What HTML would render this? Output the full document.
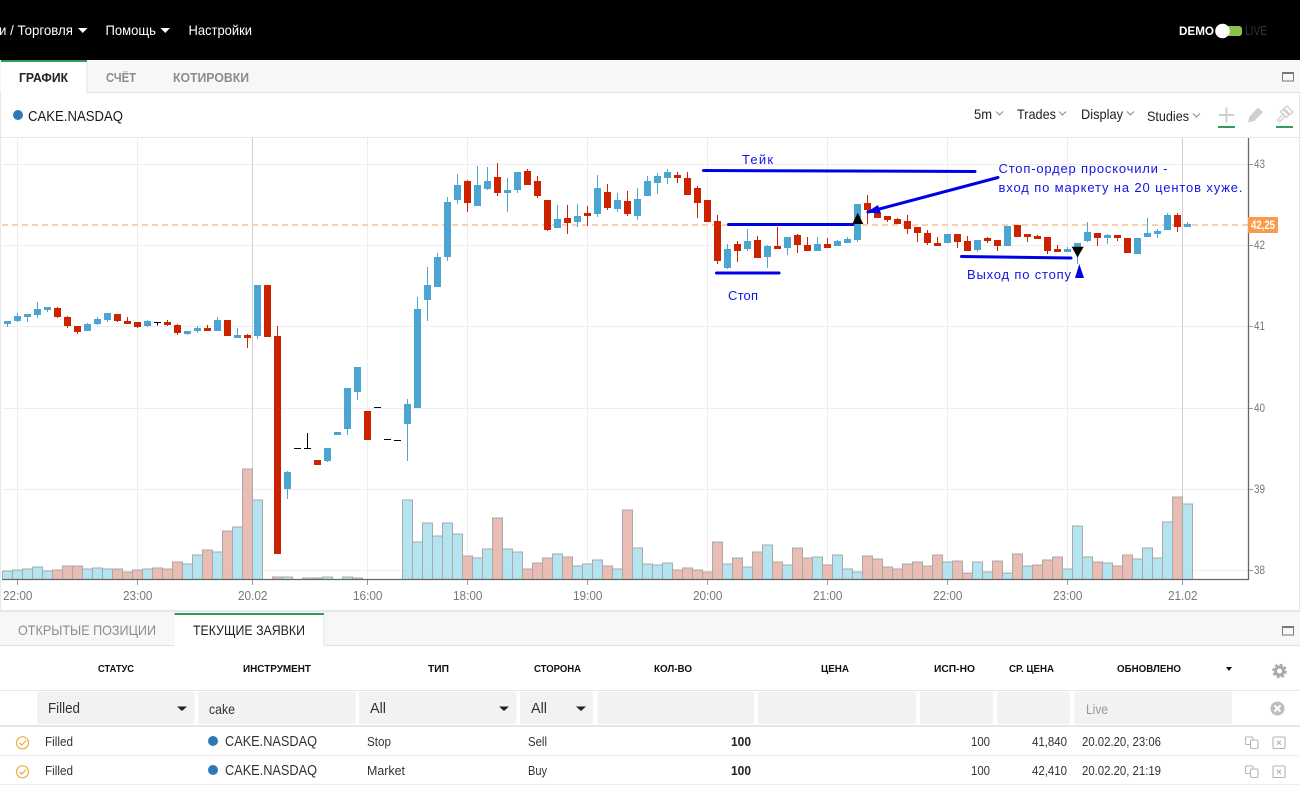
<!DOCTYPE html>
<html lang="ru"><head><meta charset="utf-8"><title>CAKE.NASDAQ</title>
<style>
html,body{margin:0;padding:0;width:1300px;height:795px;overflow:hidden;background:#fff}
svg{display:block;position:absolute;left:0;top:0}
text{font-family:"Liberation Sans","Noto Sans CJK SC",sans-serif;white-space:pre}
.n{font-size:14px;fill:#fff}
.tb{font-size:13px;fill:#8c8c8c}
.ta{font-size:13px;fill:#222;font-weight:bold}
.tl{font-size:14px;fill:#222}
.ax{font-size:13px;fill:#777}
.ay{font-size:12px;fill:#777}
.an{font-size:13px;fill:#1414e6}
.h{font-size:10.500px;font-weight:bold;fill:#111}
.c{font-size:13px;fill:#333}
.f{font-size:15px;fill:#333}
</style></head><body>
<svg width="1300" height="795" viewBox="0 0 1300 795" xmlns="http://www.w3.org/2000/svg">
<!-- header -->
<rect x="0" y="0" width="1300" height="60" fill="#000"/>
<text class="n" x="-1" y="35" textLength="74" lengthAdjust="spacingAndGlyphs">и / Торговля</text>
<path d="M78 28h9.500l-4.750 5z" fill="#fff"/>
<text class="n" x="105.500" y="35" textLength="50.500" lengthAdjust="spacingAndGlyphs">Помощь</text>
<path d="M160.500 28h9.500l-4.750 5z" fill="#fff"/>
<text class="n" x="188.500" y="35" textLength="63.500" lengthAdjust="spacingAndGlyphs">Настройки</text>
<text x="1179" y="35" font-size="12" font-weight="bold" fill="#fff" textLength="35" lengthAdjust="spacingAndGlyphs">DEMO</text>
<rect x="1222" y="26" width="20" height="10" rx="3" fill="#8bc34a"/>
<circle cx="1222.500" cy="31" r="7.300" fill="#fff"/>
<text x="1245" y="35" font-size="13" fill="#333" textLength="22" lengthAdjust="spacingAndGlyphs">LIVE</text>

<!-- top tabs -->
<rect x="0" y="60" width="1300" height="32" fill="#f7f7f7"/>
<rect x="0" y="92" width="1300" height="1" fill="#e3e3e3"/>
<rect x="1" y="60" width="86" height="33" fill="#fff"/>
<rect x="1" y="60" width="86" height="2" fill="#2e9e5b"/>
<rect x="86.500" y="62" width="1" height="31" fill="#e3e3e3"/>
<text class="ta" x="19" y="82" textLength="49" lengthAdjust="spacingAndGlyphs">ГРАФИК</text>
<text class="tb" x="106" y="82" textLength="30" lengthAdjust="spacingAndGlyphs" font-weight="bold">СЧЁТ</text>
<text class="tb" x="173" y="82" textLength="76" lengthAdjust="spacingAndGlyphs" font-weight="bold">КОТИРОВКИ</text>
<g fill="none" stroke="#777"><rect x="1282.500" y="72.500" width="11" height="8.500"/><path d="M1282 73h12" stroke-width="2"/></g>

<!-- toolbar -->
<circle cx="18" cy="115" r="5" fill="#2e78b5"/>
<text x="28" y="121" font-size="15" fill="#1a1a1a" textLength="95" lengthAdjust="spacingAndGlyphs">CAKE.NASDAQ</text>
<text class="tl" x="974" y="119" textLength="18" lengthAdjust="spacingAndGlyphs">5m</text>
<text class="tl" x="1017" y="119" textLength="39" lengthAdjust="spacingAndGlyphs">Trades</text>
<text class="tl" x="1081" y="119" textLength="42" lengthAdjust="spacingAndGlyphs">Display</text>
<text class="tl" x="1147" y="121" textLength="42" lengthAdjust="spacingAndGlyphs">Studies</text>
<path d="M996 111.500l3.500 3.500 3.500-3.500M1059 111.500l3.500 3.500 3.500-3.500M1127 111.500l3.500 3.500 3.500-3.500M1193 113.500l3.500 3.500 3.500-3.500" fill="none" stroke="#8a8a8a"/>
<path d="M1219 115h15M1226.500 107.500v15" stroke="#cfcfcf" stroke-width="2" fill="none"/>
<rect x="1218" y="126" width="17" height="2" fill="#2e9e5b"/>
<path d="M1248 122.500l1.500-6 8.500-9 5 4.500-8.500 9z" fill="#cfcfcf"/>
<g fill="none" stroke="#cfcfcf" stroke-width="1.300"><path d="M1284 108.500l3-2.500 6 6-3 2.500zM1283 109.500l-2.500 2.500 6 5.500 2.500-2.500z"/><path d="M1284 113.500l-6.500 6.500 2 2 6.500-6.500"/></g>
<rect x="1276" y="126" width="17" height="2" fill="#2e9e5b"/>
<rect x="0" y="137" width="1300" height="1" fill="#e6e6e6"/>
<rect x="0" y="93" width="1" height="517" fill="#e8e8e8"/>
<rect x="1299" y="93" width="1" height="517" fill="#e8e8e8"/>

<!-- chart grid -->
<path d="M2 164.500H1248M2 245.500H1248M2 326.500H1248M2 408.500H1248M2 489.500H1248M2 570.500H1248" stroke="#eee" stroke-width="1" fill="none"/>
<path d="M17.500 138V579M137.500 138V579M367.500 138V579M467.500 138V579M587.500 138V579M707.500 138V579M827.500 138V579M947.500 138V579M1067.500 138V579" stroke="#eee" stroke-width="1" fill="none"/>
<path d="M252.500 138V579M1182.500 138V579" stroke="#cfcfcf" stroke-width="1" fill="none"/>

<!-- volume -->
<g stroke="#a9a9a9" stroke-width="1">
<path fill="#a9e0ee" fill-opacity=".88" d="M2.500 579V571h10V579M12.500 579V570h10V579M22.500 579V569h10V579M32.500 579V567h10V579M42.500 579V571h10V579M82.500 579V569h10V579M92.500 579V568h10V579M102.500 579V569h10V579M142.500 579V569h10V579M182.500 579V564h10V579M192.500 579V555h10V579M212.500 579V552h10V579M232.500 579V527h10V579M252.500 579V500h10V579M282.500 579V577h10V579M302.500 579V578h10V579M322.500 579V577h10V579M342.500 579V577h10V579M352.500 579V578h10V579M402.500 579V500h10V579M412.500 579V542h10V579M422.500 579V523h10V579M432.500 579V536h10V579M442.500 579V523h10V579M452.500 579V534h10V579M472.500 579V558h10V579M482.500 579V549h10V579M502.500 579V549h10V579M512.500 579V552h10V579M552.500 579V554h10V579M572.500 579V566h10V579M582.500 579V564h10V579M592.500 579V560h10V579M612.500 579V569h10V579M632.500 579V548h10V579M642.500 579V564h10V579M652.500 579V565h10V579M662.500 579V563h10V579M722.500 579V564h10V579M742.500 579V567h10V579M762.500 579V545h10V579M782.500 579V565h10V579M812.500 579V557h10V579M832.500 579V555h10V579M842.500 579V569h10V579M852.500 579V572h10V579M942.500 579V562h10V579M972.500 579V562h10V579M982.500 579V572h10V579M1002.500 579V573h10V579M1022.500 579V566h10V579M1062.500 579V569h10V579M1072.500 579V526h10V579M1082.500 579V557h10V579M1102.500 579V563h10V579M1132.500 579V559h10V579M1142.500 579V548h10V579M1152.500 579V558h10V579M1162.500 579V522h10V579M1182.500 579V504h10V579"/>
<path fill="#e6b4aa" fill-opacity=".88" d="M52.500 579V570h10V579M62.500 579V566h10V579M72.500 579V566h10V579M112.500 579V569h10V579M122.500 579V572h10V579M132.500 579V570h10V579M152.500 579V568h10V579M162.500 579V569h10V579M172.500 579V562h10V579M202.500 579V550h10V579M222.500 579V531h10V579M242.500 579V469h10V579M272.500 579V577h10V579M312.500 579V578h10V579M462.500 579V556h10V579M492.500 579V518h10V579M522.500 579V569h10V579M532.500 579V563h10V579M542.500 579V558h10V579M562.500 579V557h10V579M602.500 579V566h10V579M622.500 579V510h10V579M672.500 579V570h10V579M682.500 579V568h10V579M692.500 579V570h10V579M702.500 579V572h10V579M712.500 579V542h10V579M732.500 579V558h10V579M752.500 579V552h10V579M772.500 579V562h10V579M792.500 579V548h10V579M802.500 579V558h10V579M822.500 579V565h10V579M862.500 579V556h10V579M872.500 579V559h10V579M882.500 579V567h10V579M892.500 579V569h10V579M902.500 579V564h10V579M912.500 579V562h10V579M922.500 579V566h10V579M932.500 579V555h10V579M952.500 579V561h10V579M962.500 579V573h10V579M992.500 579V561h10V579M1012.500 579V554h10V579M1032.500 579V565h10V579M1042.500 579V560h10V579M1052.500 579V557h10V579M1092.500 579V562h10V579M1112.500 579V566h10V579M1122.500 579V555h10V579M1172.500 579V497h10V579"/>
</g>

<!-- current price line -->
<path d="M2 225H1248" stroke="#fcd0ae" stroke-width="2" stroke-dasharray="6 4" fill="none"/>

<!-- candles -->
<path fill="none" stroke="#4aa5d2" stroke-width="1" d="M7.500 321V327M17.500 313V322M27.500 314V322M37.500 302V318M47.500 307V312M87.500 323V331M97.500 317V325M107.500 313V322M147.500 320V327M187.500 331V335M197.500 326V333M217.500 317V331M237.500 328V338M257.500 285V339M287.500 471V499M327.500 448V462M347.500 388V435M357.500 367V400M407.500 399V461M417.500 297V408M427.500 267V321M437.500 253V287M447.500 197V261M457.500 174V204M477.500 166V206M487.500 167V190M507.500 178V212M517.500 172V193M557.500 205V228M577.500 204V227M597.500 175V217M617.500 193V212M637.500 188V220M647.500 176V196M657.500 173V194M667.500 169V184M727.500 244V269M747.500 229V251M767.500 245V268M787.500 237V255M817.500 237V251M837.500 240V246M847.500 237V243M857.500 204V242M977.500 240V252M1067.500 247V252M1077.500 243V264M1087.500 222V242M1107.500 234V244M1147.500 218V237M1157.500 229V238M1167.500 213V230M1187.500 222V227"/>
<path fill="none" stroke="#4aa5d2" stroke-width="7" d="M7.500 321V324M17.500 316V321M27.500 314V317M37.500 309V315M47.500 307V310M87.500 324V331M97.500 319V324M107.500 313V320M147.500 321V326M187.500 331V334M197.500 328V331M217.500 320V331M237.500 335V338M257.500 285V336M287.500 472V489M327.500 448V461M337.500 432V435M347.500 388V429M357.500 367V392M407.500 404V424M417.500 309V408M427.500 285V300M437.500 257V287M447.500 202V257M457.500 185V200M477.500 185V206M487.500 181V189M507.500 190V193M517.500 172V190M557.500 219V228M577.500 216V222M597.500 188V214M617.500 200V209M637.500 199V216M647.500 181V196M657.500 176V183M667.500 172V178M727.500 249V268M747.500 241V249M767.500 246V257M787.500 237V248M817.500 244V251M837.500 241V246M847.500 239V243M857.500 204V240M947.500 234V243M977.500 240V250M1007.500 226V246M1067.500 249V252M1077.500 243V248M1087.500 232V241M1107.500 235V238M1137.500 238V254M1147.500 233V237M1157.500 231V234M1167.500 215V230M1187.500 224V227"/>
<path fill="none" stroke="#cc2200" stroke-width="1" d="M57.500 307V318M67.500 316V328M77.500 326V334M117.500 314V322M127.500 317V324M137.500 322V328M167.500 320V326M177.500 324V335M207.500 325V331M247.500 334V348M277.500 326V554M467.500 180V212M497.500 163V196M527.500 169V185M537.500 176V198M547.500 200V231M567.500 205V234M587.500 206V226M607.500 184V210M627.500 191V216M677.500 172V183M687.500 172V195M697.500 186V218M717.500 215V264M737.500 241V262M757.500 236V258M777.500 227V249M797.500 234V253M807.500 237V251M827.500 238V248M867.500 195V224M887.500 216V222M897.500 218V224M907.500 215V234M917.500 227V242M927.500 230V245M937.500 237V246M957.500 234V248M967.500 236V251M987.500 237V243M997.500 240V251M1027.500 234V242M1037.500 235V239M1047.500 237V254M1057.500 245V252M1097.500 233V246M1117.500 235V241M1177.500 213V232"/>
<path fill="none" stroke="#cc2200" stroke-width="7" d="M57.500 308V317M67.500 317V326M77.500 326V332M117.500 314V321M127.500 321V324M137.500 322V327M167.500 322V325M177.500 325V333M207.500 328V331M227.500 320V336M247.500 335V338M267.500 285V337M277.500 336V554M317.500 460V465M367.500 411V440M467.500 181V203M497.500 177V193M527.500 171V185M537.500 181V196M547.500 200V230M567.500 218V223M587.500 213V216M607.500 192V208M627.500 201V214M677.500 175V178M687.500 178V195M697.500 188V203M707.500 200V222M717.500 221V261M737.500 244V251M757.500 240V258M777.500 246V249M797.500 235V245M807.500 245V251M827.500 244V248M867.500 203V210M877.500 213V218M887.500 216V220M897.500 219V224M907.500 221V229M917.500 227V233M927.500 233V243M937.500 243V246M957.500 234V242M967.500 241V251M987.500 238V241M997.500 240V246M1017.500 225V237M1027.500 234V237M1037.500 236V239M1047.500 237V251M1057.500 249V252M1097.500 233V238M1117.500 235V238M1127.500 238V253M1177.500 215V227"/>
<path fill="none" stroke="#000" stroke-width="1" d="M154 322.500h7M157.500 322V325.500M294 448.500h7M304 448.500h7M307.500 433V448.500M374 407.500h7M384 439.500h7M394 440.500h7"/>

<!-- axes -->
<path d="M2 579.500H1248.500M1248.500 138V580" stroke="#666" stroke-width="1.300" fill="none"/>
<path d="M17.500 580v5M137.500 580v5M252.500 580v5M367.500 580v5M467.500 580v5M587.500 580v5M707.500 580v5M827.500 580v5M947.500 580v5M1067.500 580v5M1182.500 580v5M1249 164.500h4M1249 245.500h4M1249 326.500h4M1249 408.500h4M1249 489.500h4M1249 570.500h4" stroke="#999" fill="none"/>
<text class="ax" x="3" y="600" textLength="29.500" lengthAdjust="spacingAndGlyphs">22:00</text>
<text class="ax" x="123" y="600" textLength="29.500" lengthAdjust="spacingAndGlyphs">23:00</text>
<text class="ax" x="238" y="600" textLength="29.500" lengthAdjust="spacingAndGlyphs">20.02</text>
<text class="ax" x="353" y="600" textLength="29.500" lengthAdjust="spacingAndGlyphs">16:00</text>
<text class="ax" x="453" y="600" textLength="29.500" lengthAdjust="spacingAndGlyphs">18:00</text>
<text class="ax" x="573" y="600" textLength="29.500" lengthAdjust="spacingAndGlyphs">19:00</text>
<text class="ax" x="693" y="600" textLength="29.500" lengthAdjust="spacingAndGlyphs">20:00</text>
<text class="ax" x="813" y="600" textLength="29.500" lengthAdjust="spacingAndGlyphs">21:00</text>
<text class="ax" x="933" y="600" textLength="29.500" lengthAdjust="spacingAndGlyphs">22:00</text>
<text class="ax" x="1053" y="600" textLength="29.500" lengthAdjust="spacingAndGlyphs">23:00</text>
<text class="ax" x="1168" y="600" textLength="29.500" lengthAdjust="spacingAndGlyphs">21.02</text>
<text class="ay" x="1254" y="168" textLength="11" lengthAdjust="spacingAndGlyphs">43</text>
<text class="ay" x="1254" y="249" textLength="11" lengthAdjust="spacingAndGlyphs">42</text>
<text class="ay" x="1254" y="330" textLength="11" lengthAdjust="spacingAndGlyphs">41</text>
<text class="ay" x="1254" y="412" textLength="11" lengthAdjust="spacingAndGlyphs">40</text>
<text class="ay" x="1254" y="493" textLength="11" lengthAdjust="spacingAndGlyphs">39</text>
<text class="ay" x="1254" y="574" textLength="11" lengthAdjust="spacingAndGlyphs">38</text>
<rect x="1248" y="217" width="30" height="16" fill="#fb9a4b"/>
<text x="1251" y="229" font-size="12" font-weight="bold" fill="#fff" textLength="24" lengthAdjust="spacingAndGlyphs">42,25</text>

<!-- annotations -->
<g stroke="#0000e6" stroke-width="3" stroke-linecap="round" fill="none">
<path d="M703.500 170.500L975 171.500"/>
<path d="M728.500 224.500H853"/>
<path d="M716.500 273H779"/>
<path d="M961.500 256.500L1071 258"/>
<path d="M998 177.500L868 212"/>
</g>
<path d="M866 212.500L878 205 881 213.500z" fill="#0000e6"/>
<path d="M857.700 212.700L852.300 224H863.300z" fill="#000"/>
<path d="M1071.700 246.700H1083.700L1077.500 257.500z" fill="#000"/>
<path d="M1079.300 264L1075 278H1084z" fill="#0000e6"/>
<text class="an" x="742" y="164" textLength="31">Тейк</text>
<text class="an" x="728" y="300" textLength="30">Стоп</text>
<text class="an" x="967" y="279" textLength="104">Выход по стопу</text>
<text class="an" x="998.500" y="173" textLength="169">Стоп-ордер проскочили -</text>
<text class="an" x="998.500" y="192" textLength="244">вход по маркету на 20 центов хуже.</text>

<!-- bottom tabs -->
<rect x="0" y="610" width="1300" height="2" fill="#e6e6e6"/>
<rect x="0" y="612" width="1300" height="33" fill="#f7f7f7"/>
<rect x="0" y="645" width="1300" height="1" fill="#e3e3e3"/>
<rect x="174.500" y="613" width="149.500" height="33" fill="#fff"/>
<rect x="174.500" y="613" width="149.500" height="2" fill="#2e9e5b"/>
<rect x="323.500" y="615" width="1" height="31" fill="#e3e3e3"/>
<text x="18" y="635" font-size="14" fill="#8c8c8c" textLength="138" lengthAdjust="spacingAndGlyphs">ОТКРЫТЫЕ ПОЗИЦИИ</text>
<text x="193" y="635" font-size="14" fill="#222" textLength="112" lengthAdjust="spacingAndGlyphs">ТЕКУЩИЕ ЗАЯВКИ</text>
<g fill="none" stroke="#777"><rect x="1282.500" y="626.500" width="11" height="8.500"/><path d="M1282 627h12" stroke-width="2"/></g>

<!-- table header -->
<text class="h" x="98" y="672" textLength="36" lengthAdjust="spacingAndGlyphs">СТАТУС</text>
<text class="h" x="243" y="672" textLength="68" lengthAdjust="spacingAndGlyphs">ИНСТРУМЕНТ</text>
<text class="h" x="428" y="672" textLength="21" lengthAdjust="spacingAndGlyphs">ТИП</text>
<text class="h" x="534" y="672" textLength="47" lengthAdjust="spacingAndGlyphs">СТОРОНА</text>
<text class="h" x="654" y="672" textLength="38" lengthAdjust="spacingAndGlyphs">КОЛ-ВО</text>
<text class="h" x="821" y="672" textLength="28" lengthAdjust="spacingAndGlyphs">ЦЕНА</text>
<text class="h" x="934" y="672" textLength="41" lengthAdjust="spacingAndGlyphs">ИСП-НО</text>
<text class="h" x="1009" y="672" textLength="45" lengthAdjust="spacingAndGlyphs">СР. ЦЕНА</text>
<text class="h" x="1117" y="672" textLength="64" lengthAdjust="spacingAndGlyphs">ОБНОВЛЕНО</text>
<path d="M1226 667h6l-3 4z" fill="#111"/>
<circle cx="1279.500" cy="671" r="4" fill="none" stroke="#aaa" stroke-width="3"/>
<circle cx="1279.500" cy="671" r="6.300" fill="none" stroke="#aaa" stroke-width="2" stroke-dasharray="2.800 2.150"/>
<rect x="0" y="690" width="1300" height="1" fill="#e6e6e6"/>

<!-- filters -->
<g fill="#f2f2f2">
<rect x="37" y="692" width="157.500" height="32" rx="2"/>
<rect x="198" y="692" width="157.500" height="32" rx="2"/>
<rect x="359" y="692" width="157.500" height="32" rx="2"/>
<rect x="520" y="692" width="73" height="32" rx="2"/>
<rect x="597.500" y="692" width="156.500" height="32" rx="2"/>
<rect x="758" y="692" width="158" height="32" rx="2"/>
<rect x="920" y="692" width="73" height="32" rx="2"/>
<rect x="997" y="692" width="73" height="32" rx="2"/>
<rect x="1074.500" y="692" width="157.500" height="32" rx="2"/>
</g>
<text class="f" x="48" y="713" textLength="32" lengthAdjust="spacingAndGlyphs">Filled</text>
<text x="209" y="714" font-size="14" fill="#333" textLength="26" lengthAdjust="spacingAndGlyphs">cake</text>
<text class="f" x="370" y="713" textLength="16" lengthAdjust="spacingAndGlyphs">All</text>
<text class="f" x="531" y="713" textLength="16" lengthAdjust="spacingAndGlyphs">All</text>
<text x="1086" y="714" font-size="14" fill="#999" textLength="22" lengthAdjust="spacingAndGlyphs">Live</text>
<path d="M177 706.500h10l-5 4.500zM499 706.500h10l-5 4.500zM576 706.500h10l-5 4.500z" fill="#222"/>
<circle cx="1277.500" cy="708.500" r="7" fill="#bdbdbd"/>
<path d="M1274.500 705.500l6 6M1280.500 705.500l-6 6" stroke="#fff" stroke-width="2" fill="none"/>
<rect x="0" y="725" width="1300" height="2" fill="#e6e6e6"/>

<!-- rows -->
<rect x="0" y="755" width="1300" height="1" fill="#eee"/>
<rect x="0" y="784" width="1300" height="1" fill="#eee"/>
<g fill="none" stroke="#e5ae3e" stroke-width="1.200">
<circle cx="22.500" cy="742.800" r="6"/><path d="M19.500 742.800l2.300 2.300 4.200-4.500"/>
<circle cx="22.500" cy="771.800" r="6"/><path d="M19.500 771.800l2.300 2.300 4.200-4.500"/>
</g>
<text class="c" x="45" y="746" textLength="28" lengthAdjust="spacingAndGlyphs">Filled</text>
<text class="c" x="45" y="775" textLength="28" lengthAdjust="spacingAndGlyphs">Filled</text>
<circle cx="213" cy="741" r="5" fill="#2e78b5"/>
<circle cx="213" cy="770" r="5" fill="#2e78b5"/>
<text x="225" y="746" font-size="15" fill="#333" textLength="92" lengthAdjust="spacingAndGlyphs">CAKE.NASDAQ</text>
<text x="225" y="775" font-size="15" fill="#333" textLength="92" lengthAdjust="spacingAndGlyphs">CAKE.NASDAQ</text>
<text class="c" x="367" y="746" textLength="24" lengthAdjust="spacingAndGlyphs">Stop</text>
<text class="c" x="367" y="775" textLength="38" lengthAdjust="spacingAndGlyphs">Market</text>
<text class="c" x="528" y="746" textLength="19" lengthAdjust="spacingAndGlyphs">Sell</text>
<text class="c" x="528" y="775" textLength="19" lengthAdjust="spacingAndGlyphs">Buy</text>
<text x="731" y="746" font-size="13" font-weight="bold" fill="#222" textLength="20" lengthAdjust="spacingAndGlyphs">100</text>
<text x="731" y="775" font-size="13" font-weight="bold" fill="#222" textLength="20" lengthAdjust="spacingAndGlyphs">100</text>
<text class="c" x="971" y="746" textLength="19" lengthAdjust="spacingAndGlyphs">100</text>
<text class="c" x="971" y="775" textLength="19" lengthAdjust="spacingAndGlyphs">100</text>
<text class="c" x="1032" y="746" textLength="35" lengthAdjust="spacingAndGlyphs">41,840</text>
<text class="c" x="1032" y="775" textLength="35" lengthAdjust="spacingAndGlyphs">42,410</text>
<text class="c" x="1082" y="746" textLength="79" lengthAdjust="spacingAndGlyphs">20.02.20, 23:06</text>
<text class="c" x="1082" y="775" textLength="79" lengthAdjust="spacingAndGlyphs">20.02.20, 21:19</text>
<g fill="none" stroke="#b5b5b5" stroke-width="1.100">
<path d="M1250.500 744.500h-4a1 1 0 0 1-1-1v-5.500a1 1 0 0 1 1-1h5.500a1 1 0 0 1 1 1v1.500"/><rect x="1250.500" y="740" width="7.500" height="8.500" rx="1.500"/>
<path d="M1250.500 773.500h-4a1 1 0 0 1-1-1v-5.500a1 1 0 0 1 1-1h5.500a1 1 0 0 1 1 1v1.500"/><rect x="1250.500" y="769" width="7.500" height="8.500" rx="1.500"/>
<rect x="1273" y="737" width="12" height="11.500" rx="1"/><path d="M1277 740.800l4 4M1281 740.800l-4 4"/>
<rect x="1273" y="766" width="12" height="11.500" rx="1"/><path d="M1277 769.800l4 4M1281 769.800l-4 4"/>
</g>
</svg>
</body></html>
